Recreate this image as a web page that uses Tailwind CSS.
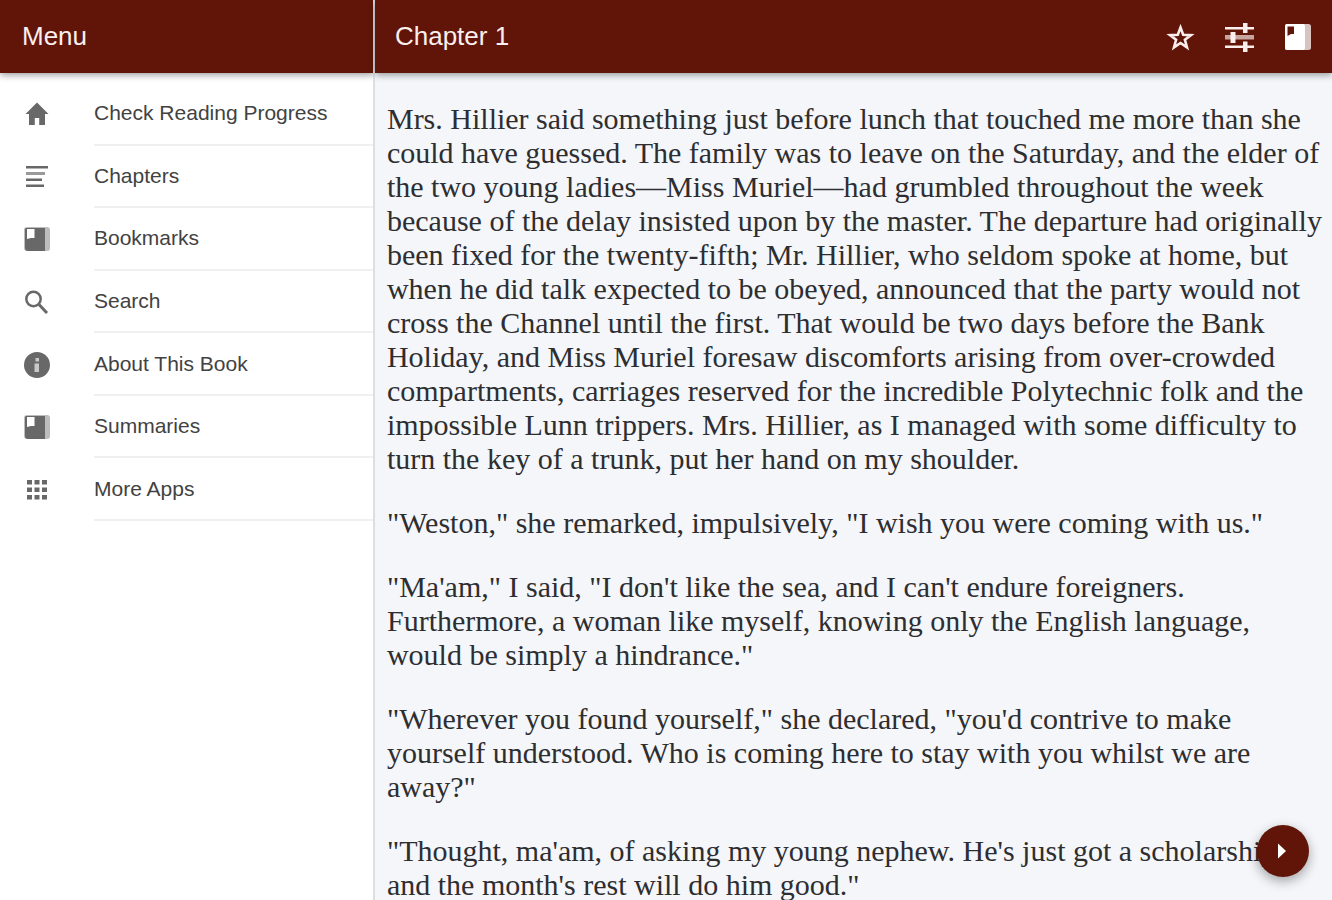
<!DOCTYPE html>
<html lang="en">
<head>
    <meta charset="UTF-8" />
    <meta name="viewport" content="width=device-width, initial-scale=1.0" />
    <title>Chapter 1</title>
    <script src="https://cdn.jsdelivr.net/npm/@tailwindcss/browser@4"></script>
</head>
<body class="h-screen flex overflow-hidden bg-white font-['Liberation_Sans',Arial,sans-serif]">
    <!-- Sidebar (left) -->
    <aside class="w-[28%] shrink-0 flex flex-col">
        <header class="z-10 h-[73px] shrink-0 flex items-center bg-[#611509] px-[22px] shadow-[0_2px_7px_rgba(0,0,0,0.4)]">
            <h2 class="pb-0.5 text-[26px] leading-8 text-[#f8efee]">Menu</h2>
        </header>
        <nav class="pt-[10px] text-[21px] leading-6 text-[#424242]">
            <ul class="grid h-[438px] auto-rows-fr">
                <li><a href="#progress" class="flex h-full items-center pl-6">
                    <svg class="size-[26px] shrink-0 mr-11 fill-[#686868]" viewBox="0 0 26 26"><path d="M13 1.500 1.500 13H5v11h5.800v-7h4.400v7H21V13h3.500z" /></svg>
                    <span class="flex h-full flex-1 items-center border-b-2 border-[#f0f0f0]">Check Reading Progress</span>
                </a></li>
                <li><a href="#chapters" class="flex h-full items-center pl-6">
                    <svg class="size-[26px] shrink-0 mr-11 fill-[#686868]" viewBox="0 0 26 26"><path d="M2 2h22v2.500H2zM2 14.500h16V17H2zM2 20.500h18V23H2z" /><path d="M2 8h19v3H2z" fill="#9a9a9a" /></svg>
                    <span class="flex h-full flex-1 items-center border-b-2 border-[#f0f0f0]">Chapters</span>
                </a></li>
                <li><a href="#bookmarks" class="flex h-full items-center pl-6">
                    <svg class="size-[26px] shrink-0 mr-11" viewBox="0 0 26 26"><rect x="0" y="1" width="26" height="24" rx="3" fill="#bdbdbd" /><path d="M2 2h19v23H4a3 3 0 0 1-3-3V3z" fill="#686868" /><path d="M3 3h7.500v9H7l-4 1z" fill="#fff" /></svg>
                    <span class="flex h-full flex-1 items-center border-b-2 border-[#f0f0f0]">Bookmarks</span>
                </a></li>
                <li><a href="#search" class="flex h-full items-center pl-6">
                    <svg class="size-[26px] shrink-0 mr-11" viewBox="0 0 26 26" fill="none" stroke="#686868"><circle cx="9.500" cy="10" r="7.200" stroke-width="2.500" /><path d="m15 15.500 8 8.500" stroke-width="3" /></svg>
                    <span class="flex h-full flex-1 items-center border-b-2 border-[#f0f0f0]">Search</span>
                </a></li>
                <li><a href="#about" class="flex h-full items-center pl-6">
                    <svg class="size-[26px] shrink-0 mr-11" viewBox="0 0 26 26"><circle cx="13" cy="13" r="13" fill="#686868" /><path d="M11.500 6h3.500v3.500h-3.500zM10.500 11.500H15V20h-4.500z" fill="#c8c8c8" /></svg>
                    <span class="flex h-full flex-1 items-center border-b-2 border-[#f0f0f0]">About This Book</span>
                </a></li>
                <li><a href="#summaries" class="flex h-full items-center pl-6">
                    <svg class="size-[26px] shrink-0 mr-11" viewBox="0 0 26 26"><rect x="0" y="1" width="26" height="24" rx="3" fill="#bdbdbd" /><path d="M2 2h19v23H4a3 3 0 0 1-3-3V3z" fill="#686868" /><path d="M3 3h7.500v9H7l-4 1z" fill="#fff" /></svg>
                    <span class="flex h-full flex-1 items-center border-b-2 border-[#f0f0f0]">Summaries</span>
                </a></li>
                <li><a href="#apps" class="flex h-full items-center pl-6">
                    <svg class="size-[26px] shrink-0 mr-11 fill-[#686868]" viewBox="0 0 26 26"><path d="M3 3h5v4.500H3zM10.500 3h5v4.500h-5zM18 3h5v4.500h-5zM3 10.500h5V15H3zM10.500 10.500h5V15h-5zM18 10.500h5V15h-5zM3 18h5v4.500H3zM10.500 18h5v4.500h-5zM18 18h5v4.500h-5z" /></svg>
                    <span class="flex h-full flex-1 items-center border-b-2 border-[#f0f0f0]">More Apps</span>
                </a></li>
            </ul>
        </nav>
    </aside>

    <!-- Reader -->
    <main class="z-10 min-w-0 flex-1 flex flex-col border-l-2 border-[#dcdfe2] bg-[#f4f6fa]">
        <header class="z-10 h-[73px] shrink-0 flex items-center bg-[#611509] pl-5 pr-5 shadow-[0_2px_7px_rgba(0,0,0,0.4)]">
            <h1 class="flex-1 pb-0.5 text-[26px] leading-8 text-[#f8efee]">Chapter 1</h1>
            <div class="flex items-center gap-7">
                <button aria-label="Add bookmark"><svg class="size-[30px]" viewBox="0 0 30 30" fill="none" stroke="#fbeeec" stroke-width="2.600"><path d="m14.500 5.500 2.700 7.300 7.800.3-6.100 4.700 2.100 7.600-6.500-4.400-6.500 4.400 2.100-7.600-6.100-4.700 7.800-.3z" /></svg></button>
                <button aria-label="Display settings"><svg class="size-8" viewBox="0 0 32 32" fill="#fbeeec"><path d="M1 6h29v2.500H1zM1 24.500h29V27H1zM19 2h4.500v10H19zM19 20.500h4.500V31H19z" /><path d="M1 14h29v4.500H1z" fill="#c9a5a0" /><path d="M6.500 11h5v11h-5z" /></svg></button>
                <button aria-label="Bookmarks"><svg class="size-7" viewBox="0 0 28 28"><rect x="1" y="1" width="26" height="26" rx="2.500" fill="#d9c3c0" /><rect x="1" y="1" width="20" height="26" rx="2" fill="#fff" /><path d="M3.500 3.500H10V11H7l-3.500 2z" fill="#611509" /></svg></button>
            </div>
        </header>
        <article class="min-h-0 flex-1 overflow-hidden pt-[29px] pl-3 pr-2 space-y-[30px] font-['Liberation_Serif','Times_New_Roman',serif] text-[30px] leading-[34px] text-[#2e2e30]">
            <p>Mrs. Hillier said something just before lunch that touched me more than she could have guessed. The family was to leave on the Saturday, and the elder of the two young ladies—Miss Muriel—had grumbled throughout the week because of the delay insisted upon by the master. The departure had originally been fixed for the twenty-fifth; Mr. Hillier, who seldom spoke at home, but when he did talk expected to be obeyed, announced that the party would not cross the Channel until the first. That would be two days before the Bank Holiday, and Miss Muriel foresaw discomforts arising from over-crowded compartments, carriages reserved for the incredible Polytechnic folk and the impossible Lunn trippers. Mrs. Hillier, as I managed with some difficulty to turn the key of a trunk, put her hand on my shoulder.</p>
            <p>"Weston," she remarked, impulsively, "I wish you were coming with us."</p>
            <p>"Ma'am," I said, "I don't like the sea, and I can't endure foreigners. Furthermore, a woman like myself, knowing only the English language, would be simply a hindrance."</p>
            <p>"Wherever you found yourself," she declared, "you'd contrive to make yourself understood. Who is coming here to stay with you whilst we are away?"</p>
            <p>"Thought, ma'am, of asking my young nephew. He's just got a scholarship, and the month's rest will do him good."</p>
        </article>
    </main>

    <!-- Next chapter -->
    <button aria-label="Next chapter" class="fixed right-[23px] bottom-[23px] z-20 flex size-[52px] items-center justify-center rounded-full bg-[#611509] shadow-[0_4px_12px_rgba(0,0,0,0.35)]">
        <svg class="size-5" viewBox="0 0 20 20" fill="#fff"><path d="M5 2.500 13 10 5 17.500z" /></svg>
    </button>
</body>
</html>
